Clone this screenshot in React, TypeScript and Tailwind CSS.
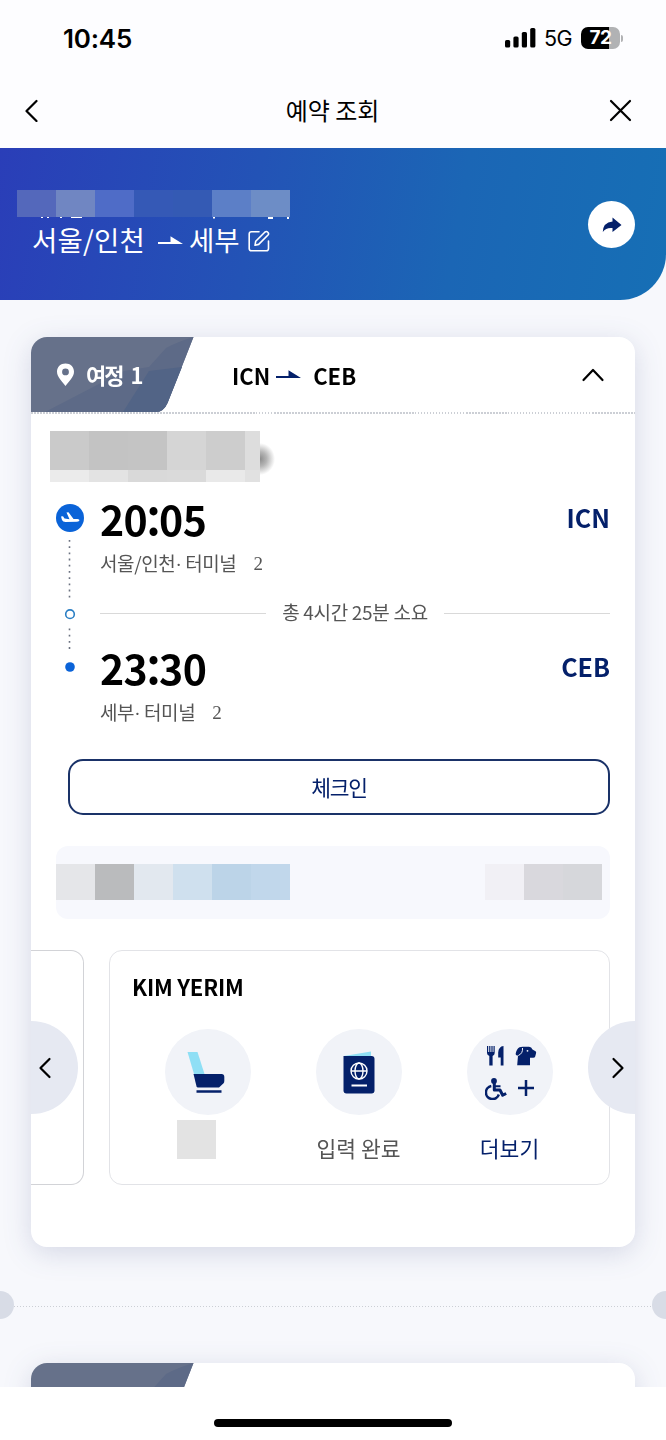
const AIRLINE_TOP = ["bg-[#cacaca]", "bg-[#c3c3c3]", "bg-[#c4c4c4]", "bg-[#d5d5d5]", "bg-[#cdcdcd]"];
const AIRLINE_BOTTOM = ["bg-[#ebebeb]", "bg-[#e3e3e3]", "bg-[#d9d9d9]", "bg-[#dadada]", "bg-[#e9e9e9]"];
const BOOKING = ["bg-[#5468bb]", "bg-[#7086c2]", "bg-[#4f6cc7]", "bg-[#3559b6]", "bg-[#345ab4]", "bg-[#5c7fc7]", "bg-[#6d8dc6]"];
const FARE_LEFT = ["bg-[#e5e6e9]", "bg-[#babbbd]", "bg-[#e2e8ef]", "bg-[#cfe0ee]", "bg-[#bcd4e8]", "bg-[#c1d7eb]"];
const FARE_RIGHT = ["bg-[#f1f0f5]", "bg-[#d9d8dd]", "bg-[#d6d7db]"];

const Masked = ({ colors, height }: { colors: string[]; height: string }) => (
    <div className="flex">
        {colors.map((color, i) => (
            <div key={i} className={`w-[39px] ${height} ${color}`} />
        ))}
    </div>
);

const Chevron = ({ d }: { d: string }) => (
    <svg width="24" height="24" viewBox="0 0 24 24" fill="none" stroke="#000" strokeWidth="2.2" strokeLinecap="round" strokeLinejoin="round">
        <path d={d} />
    </svg>
);

const RouteArrow = ({ color }: { color: string }) => (
    <svg width="25" height="10" viewBox="0 0 25 10" fill={color}>
        <path d="M0 6H12.500V0.300L25 8H0Z" />
    </svg>
);

const StatusBar = () => (
    <div className="flex h-[76px] items-center justify-between pl-[63px] pr-[43px] font-['Inter',sans-serif]">
        <span className="text-[26px] font-semibold tracking-[-0.2px]">10:45</span>
        <div className="flex items-center">
            <svg width="31" height="20" viewBox="0 0 31 20">
                <rect x="0" y="12" width="5.2" height="7.5" rx="1.6" />
                <rect x="8.4" y="8.5" width="5.2" height="11" rx="1.6" />
                <rect x="16.8" y="4" width="5.2" height="15.500" rx="1.6" />
                <rect x="25.2" y="0" width="5.2" height="19.500" rx="1.6" />
            </svg>
            <span className="ml-2 mt-px text-[21.500px] tracking-[-0.5px]">5G</span>
            <div className="ml-[9px] flex h-[22px] w-[39px] items-center justify-center rounded-[7px] bg-[linear-gradient(90deg,#000_72%,#b1b2b4_72%)] text-[19px] font-bold tracking-[-0.5px] text-white">
                72
            </div>
            <div className="ml-px h-[7px] w-[2px] rounded-r-full bg-[#b1b2b4]" />
        </div>
    </div>
);

const TopBar = () => (
    <div className="flex h-[72px] items-center justify-between pb-[5px] pl-[20px] pr-[33px]">
        <svg width="24" height="24" viewBox="0 0 24 24" fill="none" stroke="#000" strokeWidth="2.2" strokeLinecap="round" strokeLinejoin="round">
            <path d="M16.500 3L6.500 13L16.500 23" />
        </svg>
        <h1 className="ml-[14px] text-[24px] leading-6">예약 조회</h1>
        <svg width="26" height="26" viewBox="0 0 26 26" fill="none" stroke="#000" strokeWidth="2.2" strokeLinecap="round">
            <path d="M4 4L23 23M23 4L4 23" />
        </svg>
    </div>
);

const Banner = () => (
    <div className="flex h-[152px] justify-between rounded-br-[46px] bg-[linear-gradient(100deg,#2a3eb8_0%,#2353b6_38%,#1b66b5_68%,#166fb5_100%)] pl-[17px] pr-[31px] pt-[42px] text-white">
        <div>
            <Masked colors={BOOKING} height="h-[27px]" />
            <svg width="273" height="2" viewBox="0 0 273 2" fill="#fff">
                <path d="M24 0h2v1h-2zM30 0h2v1h-2zM43 0h2v1h-2zM54 0h11v1h-11zM196 0h2v1.500h-2zM251 0h5v2h-5zM270 0h2v2h-2z" />
            </svg>
            <div className="flex h-[42px] items-center pl-[15px] text-[27.500px]">
                <span className="tracking-[0.2px]">서울/인천</span>
                <div className="ml-[13px] mt-0.5"><RouteArrow color="#fff" /></div>
                <span className="ml-1.5">세부</span>
                <svg className="ml-2 mt-0.5" width="22" height="22" viewBox="0 0 22 22" fill="none" stroke="#fff" strokeWidth="1.6" strokeLinecap="round" strokeLinejoin="round">
                    <path d="M11 1.800H3.500Q1.200 1.800 1.200 4V18.500Q1.200 20.800 3.500 20.800H18.200Q20.500 20.800 20.500 18.500V11" />
                    <path d="M7 15.300L7.700 11.300L17 2Q18.500 0.900 19.800 2.200Q21.200 3.600 20 5L10.700 14.400Z" />
                </svg>
            </div>
        </div>
        <button className="mt-[11px] flex size-[47px] items-center justify-center rounded-full bg-white">
            <svg width="20" height="16" viewBox="0 0 20 16" fill="#04206a">
                <path d="M10.500 0.500L19.500 8L10.500 15V11Q4 10.300 0.800 15Q1 5.500 10.500 4.500Z" />
            </svg>
        </button>
    </div>
);

const LegTab = () => (
    <svg className="block" width="163" height="75" viewBox="0 0 163 75">
        <path d="M0 0H162.500L136.500 66Q132.500 75 125 75H0Z" fill="#66718a" />
        <path d="M162.500 0L136.500 66Q132.500 75 125 75H14L93 34L118 30L135 11Q146 5 162.500 0Z" fill="#5d6a87" />
        <path d="M151 30L136.500 66Q132.500 75 125 75H92L118 34Z" fill="#526486" />
    </svg>
);

const Dots = ({ className }: { className: string }) => (
    <div className={`h-[1.500px] bg-[repeating-linear-gradient(90deg,#cccfd5_0px,#cccfd5_1.500px,transparent_1.500px,transparent_3px)] ${className}`} />
);

const LegHeader = () => (
    <div className="h-[77px]">
        <div className="flex h-[75px] items-center">
            <div className="relative h-[75px]">
                <LegTab />
                <div className="absolute inset-0 flex items-center pl-[25px] text-[22px] font-bold text-white">
                    <svg width="19" height="24" viewBox="0 0 19 24" fill="#fff" fillRule="evenodd">
                        <path d="M9.500 0.500C4.500 0.500 1 4 1 8.800C1 14 6 18.500 9.500 23C13 18.500 18 14 18 8.800C18 4 14.500 0.500 9.500 0.500ZM9.500 5.500A3.400 3.400 0 1 1 9.500 12.300A3.400 3.400 0 1 1 9.500 5.500Z" />
                    </svg>
                    <span className="ml-[11px] tracking-[-2px] [word-spacing:5px]">여정 1</span>
                </div>
            </div>
            <div className="ml-[38px] flex items-center pt-px text-[22px] font-bold text-black">
                <span>ICN</span>
                <div className="ml-1.5"><RouteArrow color="#04206a" /></div>
                <span className="ml-3">CEB</span>
            </div>
            <div className="ml-auto mr-[30px] mt-px">
                <Chevron d="M2.500 17L12 7L21.500 17" />
            </div>
        </div>
        <Dots className="" />
    </div>
);

const Timeline = () => (
    <svg width="28" height="172" viewBox="0 0 28 172" fill="none">
        <circle cx="14" cy="14" r="14" fill="#0a63d8" />
        <path d="M5 12.500L7 12.300L8.500 14.500L13.500 15.200L10.500 8.600L12.500 8.200L17.500 15L21.500 14.900Q23.500 15.100 23.500 16.300Q23.300 17.600 21 17.700L9.500 18Q6.800 17.900 6 16Z" fill="#fff" />
        <path d="M13.500 36V96" stroke="#6b7280" strokeWidth="1.600" strokeDasharray="1.800 4.400" />
        <circle cx="14" cy="110.200" r="4.300" stroke="#2b7fc4" strokeWidth="1.600" />
        <path d="M13.500 124.500V145" stroke="#6b7280" strokeWidth="1.600" strokeDasharray="1.800 4.400" />
        <circle cx="14" cy="163" r="4.800" fill="#0a63d8" />
    </svg>
);

const Stop = ({ hour, minute, code, place }: { hour: string; minute: string; code: string; place: string }) => (
    <div>
        <div className="flex h-12 items-center justify-between">
            <span className="flex pb-[3px] text-[41px] font-bold leading-[41px] tracking-[-0.6px] text-black">
                {hour}
                <span className="-mx-[1.500px] -translate-y-[6px] text-[52px] font-medium">:</span>
                {minute}
            </span>
            <span className="pb-[5px] text-[25px] font-bold text-[#04206a]">{code}</span>
        </div>
        <div className="mt-2 flex h-6 items-center pt-px text-[19px] text-[#555]">
            <span className="tracking-[-0.4px]">
                {place}
                <span className="font-['Liberation_Serif',serif]">·</span> 터미널
            </span>
            <span className="ml-[17px] font-['Liberation_Serif',serif]">2</span>
        </div>
    </div>
);

const SeatIcon = () => (
    <svg className="mr-1" width="40" height="44" viewBox="0 0 40 44">
        <path d="M1.500 2H11.500L18.500 24H8Z" fill="#8fdff5" />
        <path d="M7.500 24H35.500Q38.300 24 38.300 27V31Q38.300 32.500 37.300 33.500L33 37.500H12Q10.800 37.500 10.500 36.300Z" fill="#04206a" />
        <path d="M10.500 41.500H35.500" stroke="#04206a" strokeWidth="2.400" />
    </svg>
);

const PassportIcon = () => (
    <svg width="32" height="44" viewBox="0 0 32 44" fill="none">
        <path d="M1 6L28 1.500V8H1Z" fill="#8fdff5" />
        <path d="M0.500 6H28.500Q31.500 6 31.500 9V40.500Q31.500 43.500 28.500 43.500H3.500Q0.500 43.500 0.500 40.500Z" fill="#04206a" />
        <g stroke="#fff" strokeWidth="1.400">
            <circle cx="16" cy="21" r="8" />
            <ellipse cx="16" cy="21" rx="4" ry="8" />
            <path d="M8 21H24" />
            <path d="M8.500 35.500H24" strokeWidth="1.800" />
        </g>
    </svg>
);

const MoreIcon = () => (
    <svg className="ml-1" width="54" height="56" viewBox="0 0 54 56" fill="#04206a">
        <path d="M2 2H3.200V8H4.200V2H5.400V8H6.400V2H7.600V8H8.500V2H9.700V9Q9.700 11 7.600 12V21.500H4.300V12Q2 11 2 9Z" />
        <path d="M18.500 2V21.500H15.700V13.500H13.200V8.500Q13.600 2.500 18.500 2Z" />
        <path d="M34.500 3.200Q36 2.600 38.500 2.700H44Q46.500 3 47.500 5.500L50.500 7.200Q51.500 7.800 51 9.500L50.200 12.500Q49.800 13.800 48.200 13.800H45V21.300H32.200L33 11.500Q30.300 12 30.700 9.500Q31.500 5 34.500 3.200Z" />
        <path d="M37.500 4Q38 9.500 33.300 11.500" fill="none" stroke="#f1f3f9" strokeWidth="1" />
        <circle cx="42.500" cy="6.800" r="0.900" fill="#f1f3f9" />
        <circle cx="9" cy="37" r="2.900" />
        <g fill="none" stroke="#04206a" strokeLinejoin="round">
            <path d="M9.300 38.500V46H15L17.700 51.200L21.200 49.500" strokeWidth="3" />
            <path d="M9.500 42.200H15.500" strokeWidth="2" />
            <path d="M6.300 42A6.600 6.600 0 1 0 13.800 50.500" strokeWidth="2.500" />
            <path d="M41 36V52M33 44H49" strokeWidth="2.500" />
        </g>
    </svg>
);

const Service = ({ icon, label }: { icon: React.ReactNode; label?: React.ReactNode }) => (
    <div className="flex w-[151px] flex-col items-center">
        <div className="flex size-[86px] items-center justify-center rounded-full bg-[#f1f3f8]">{icon}</div>
        {label}
    </div>
);

const Passengers = () => (
    <div className="relative mt-[31px] flex h-[235px] gap-[25px] overflow-hidden">
        <div className="w-[53px] rounded-r-[13px] border border-l-0 border-[#d2d3d7]" />
        <div className="w-[501px] rounded-[13px] border border-[#e2e3e7] pt-[19px]">
            <h2 className="pl-[22px] text-[22px] font-bold leading-[32px] tracking-[-0.2px] text-black">KIM YERIM</h2>
            <div className="mt-[27px] flex pl-[22px]">
                <Service icon={<SeatIcon />} label={<div className="mr-[22px] mt-[5px] size-[39px] bg-[#e3e3e3]" />} />
                <Service icon={<PassportIcon />} label={<span className="mt-[17px] text-[21.500px] leading-8 text-[#555]">입력 완료</span>} />
                <Service icon={<MoreIcon />} label={<span className="mt-[17px] text-[21.500px] leading-8 text-[#04206a]">더보기</span>} />
            </div>
        </div>
        {/* carousel arrows, half cut off by the card's edges */}
        <button className="absolute -left-[46px] top-[71px] flex size-[93px] items-center justify-end rounded-full bg-[#e6e9f2] pr-[21px]">
            <Chevron d="M16.500 3L7.500 12L16.500 21" />
        </button>
        <button className="absolute -right-[46px] top-[71px] flex size-[93px] items-center rounded-full bg-[#e6e9f2] pl-[17px]">
            <Chevron d="M8.500 3L17.500 12L8.500 21" />
        </button>
    </div>
);

const Itinerary = () => (
    <div className="mx-[31px] mt-[37px] h-[910px] overflow-hidden rounded-2xl bg-white">
        <LegHeader />
        <div className="mt-[17px] flex pl-[19px]">
            <div>
                <Masked colors={AIRLINE_TOP} height="h-[39px]" />
                <Masked colors={AIRLINE_BOTTOM} height="h-[12px]" />
            </div>
            <div className="h-[51px] w-[15px] border-b-[12px] border-[#e1e1e1] bg-[#ddd]" />
            <div className="h-[51px] w-6 bg-[radial-gradient(ellipse_15px_16px_at_0px_28px,#8c8c8c_0%,#b5b5b5_45%,#fff_100%)]" />
        </div>
        <div className="mt-[14px] flex pl-[25px] pr-[25px]">
            <div className="pt-2"><Timeline /></div>
            <div className="ml-4 flex-1">
                <Stop hour="20" minute="05" code="ICN" place="서울/인천" />
                <div className="mb-5 mt-[25px] flex h-6 items-center gap-4 text-[19px] text-[#555]">
                    <div className="h-px flex-1 bg-[#d9d9d9]" />
                    <span className="pb-0.5 tracking-[-0.3px]">총 4시간 25분 소요</span>
                    <div className="h-px flex-1 bg-[#d9d9d9]" />
                </div>
                <Stop hour="23" minute="30" code="CEB" place="세부" />
            </div>
        </div>
        <button className="ml-[37px] mr-[25px] mt-[34px] flex h-14 w-[542px] items-center justify-center rounded-[15px] border-2 border-[#1a3268] text-[21.500px] tracking-[-1.200px] text-[#04206a]">
            체크인
        </button>
        <div className="ml-[25px] mt-[31px] flex h-[73px] w-[554px] items-center justify-between rounded-xl bg-[#f7f8fd] pb-[2px] pr-2">
            <Masked colors={FARE_LEFT} height="h-9" />
            <Masked colors={FARE_RIGHT} height="h-9" />
        </div>
        <Passengers />
    </div>
);

const App = () => {
    return (
        <div className="flex h-[1440px] w-[666px] flex-col overflow-hidden bg-[#fdfdff] font-['Noto_Sans_CJK_KR','Noto_Sans_CJK_JP',sans-serif] text-black">
            <StatusBar />
            <TopBar />
            <main className="h-[1239px] overflow-hidden bg-[#f7f8fc]">
                <Banner />
                <div className="drop-shadow-[0_6px_14px_rgba(40,52,110,0.16)]">
                    <Itinerary />
                </div>
                <div className="-mx-[14px] mt-11 flex h-7 items-center justify-between">
                    <div className="size-7 rounded-full bg-[#d8dce6]" />
                    <Dots className="mt-[3px] flex-1" />
                    <div className="size-7 rounded-full bg-[#d8dce6]" />
                </div>
                <div className="mx-[31px] mt-11 h-[100px] drop-shadow-[0_6px_14px_rgba(40,52,110,0.16)]">
                    <div className="h-full overflow-hidden rounded-2xl bg-white">
                        <LegTab />
                    </div>
                </div>
            </main>
            <footer className="flex flex-1 justify-center bg-white pt-8">
                <div className="h-2 w-[238px] rounded-full bg-black" />
            </footer>
        </div>
    );
};

export default App;
